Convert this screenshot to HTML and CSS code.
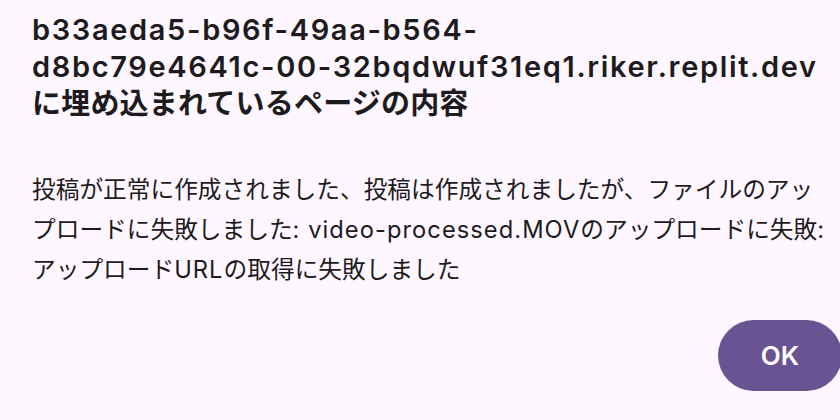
FILE: index.html
```html
<!DOCTYPE html>
<html lang="ja">
<head>
<meta charset="utf-8">
<link rel="stylesheet" href="styles.css">
</head>
<body>
<div class="dialog">
  <h1 class="title"><span class="lat">b33aeda5-b96f-49aa-b564-</span><span class="lat nobr">d8bc79e4641c-00-32bqdwuf31eq1.riker.replit.dev</span>に埋め込まれているページの内容</h1>
  <p class="message">投稿が正常に作成されました、投稿は作成されましたが、ファイルのアップロードに失敗しました<span class="lat">: video-processed.MOV</span>のアップロードに失敗<span class="lat">: </span>アップロード<span class="lat">URL</span>の取得に失敗しました</p>
  <div class="actions">
    <button class="ok">OK</button>
  </div>
</div>
</body>
</html>
```

FILE: styles.css
```css
html, body {
  margin: 0;
  padding: 0;
  background: #fef7ff;
}
body {
  width: 840px;
  height: 420px;
  overflow: hidden;
  font-family: Inter, "Noto Sans CJK JP", sans-serif;
}
.dialog {
  padding: 11px 8px 0 32px;
}
.title {
  margin: 0;
  font-size: 29px;
  line-height: 37px;
  font-weight: 600;
  letter-spacing: 0.2px;
  color: #1d1b20;
}
.title .lat {
  letter-spacing: 1.65px;
}
.nobr {
  white-space: nowrap;
}
.message {
  margin: 48px 0 0 0;
  font-size: 23.7px;
  line-height: 40px;
  font-weight: 400;
  color: #1d1b20;
}
.message .lat {
  letter-spacing: 1.05px;
}
.actions {
  display: flex;
  justify-content: flex-end;
  margin-top: 30px;
  margin-right: -10px;
}
.ok {
  width: 124px;
  height: 71px;
  border: none;
  border-radius: 36px;
  background: #6a5392;
  color: #ffffff;
  font-family: Inter, sans-serif;
  font-size: 26px;
  font-weight: 600;
  padding: 0;
}
```
